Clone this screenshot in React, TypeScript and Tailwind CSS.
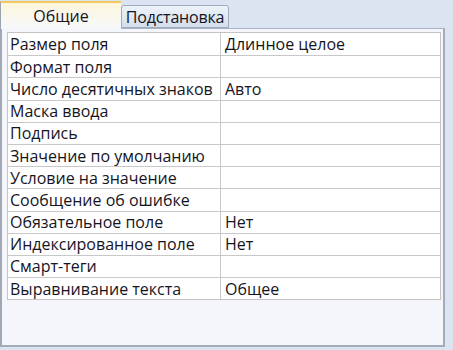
import React from 'react';

const rows: [string, string][] = [
  ['Размер поля', 'Длинное целое'],
  ['Формат поля', ''],
  ['Число десятичных знаков', 'Авто'],
  ['Маска ввода', ''],
  ['Подпись', ''],
  ['Значение по умолчанию', ''],
  ['Условие на значение', ''],
  ['Сообщение об ошибке', ''],
  ['Обязательное поле', 'Нет'],
  ['Индексированное поле', 'Нет'],
  ['Смарт-теги', ''],
  ['Выравнивание текста', 'Общее'],
];

export default function App() {
  return (
    <div
      className="w-[453px] h-[350px] bg-[#dbe5f1] overflow-hidden text-[#15151f]"
      style={{ fontFamily: '"Open Sans", "Noto Sans", sans-serif' }}
    >
      <div className="flex items-end h-[28px] pr-[8px]">
        <div className="relative z-10 w-[121px] h-[28px] bg-gradient-to-b from-[#fdf6dc] to-[#f6f8fc] border-t-2 border-t-[#f5c862] border-l border-l-[#9aa3b0] flex items-center justify-center text-[16px] -mb-px">
          Общие
        </div>
        <div className="w-[108px] h-[23px] bg-gradient-to-b from-[#eef3fa] to-[#d4deeb] border border-[#9eacc0] rounded-t-[3px] flex items-center justify-center text-[16px] tracking-[-0.2px]">
          Подстановка
        </div>
      </div>
      <div className="w-[445px] h-[319px] bg-[#f4f6fb] border-l-2 border-l-[#a0a8b4] border-r-2 border-r-[#a3acb8] border-b-2 border-b-[#a3acb8] border-t border-t-[#a8b2c0] pt-[3px] pl-[5px] pr-[3px]">
        <div className="w-[434px] border border-[#c4c4c4] bg-white">
          {rows.map(([k, v], i) => (
            <div
              key={k}
              className={`flex h-[22.2px] text-[16px] leading-none ${i > 0 ? 'border-t border-[#c8c8c8]' : ''}`}
            >
              <div className="w-[213px] border-r border-[#c8c8c8] flex items-center pl-[2px] whitespace-nowrap overflow-hidden">
                {k}
              </div>
              <div className="flex-1 flex items-center pl-[4px] whitespace-nowrap">{v}</div>
            </div>
          ))}
        </div>
      </div>
    </div>
  );
}
